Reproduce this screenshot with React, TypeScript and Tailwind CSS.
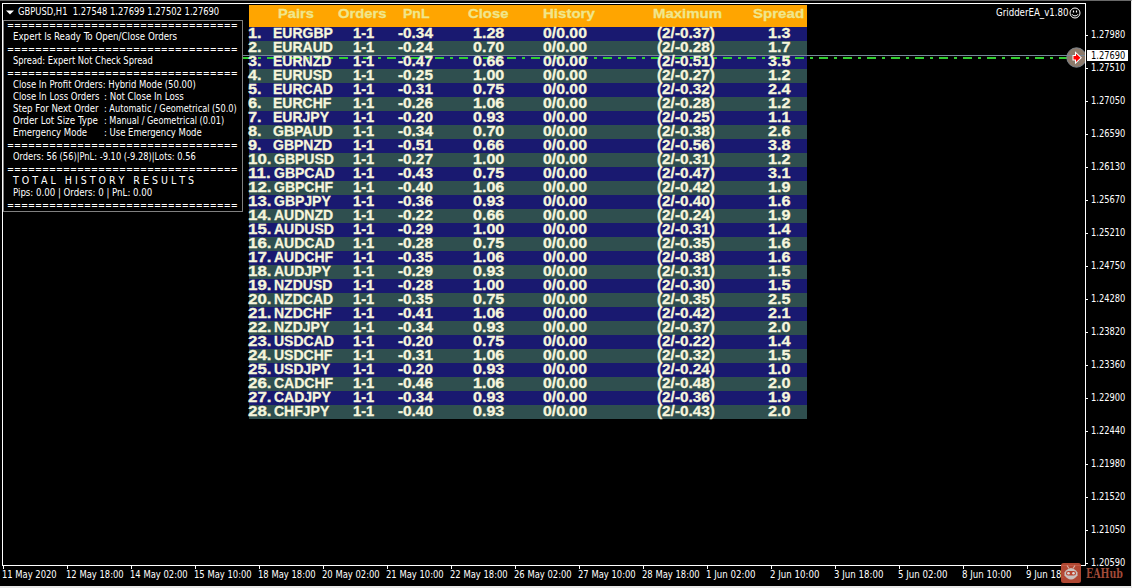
import { useLayoutEffect, useRef, useState } from "react";

type PairRow = [pair: string, pnl: string, close: string, maximum: string, spread: string];

const PAIRS: PairRow[] = [
  ["EURGBP", "-0.34", "1.28", "(2/-0.37)", "1.3"],
  ["EURAUD", "-0.24", "0.70", "(2/-0.28)", "1.7"],
  ["EURNZD", "-0.47", "0.66", "(2/-0.51)", "3.5"],
  ["EURUSD", "-0.25", "1.00", "(2/-0.27)", "1.2"],
  ["EURCAD", "-0.31", "0.75", "(2/-0.32)", "2.4"],
  ["EURCHF", "-0.26", "1.06", "(2/-0.28)", "1.2"],
  ["EURJPY", "-0.20", "0.93", "(2/-0.25)", "1.1"],
  ["GBPAUD", "-0.34", "0.70", "(2/-0.38)", "2.6"],
  ["GBPNZD", "-0.51", "0.66", "(2/-0.56)", "3.8"],
  ["GBPUSD", "-0.27", "1.00", "(2/-0.31)", "1.2"],
  ["GBPCAD", "-0.43", "0.75", "(2/-0.47)", "3.1"],
  ["GBPCHF", "-0.40", "1.06", "(2/-0.42)", "1.9"],
  ["GBPJPY", "-0.36", "0.93", "(2/-0.40)", "1.6"],
  ["AUDNZD", "-0.22", "0.66", "(2/-0.24)", "1.9"],
  ["AUDUSD", "-0.29", "1.00", "(2/-0.31)", "1.4"],
  ["AUDCAD", "-0.28", "0.75", "(2/-0.35)", "1.6"],
  ["AUDCHF", "-0.35", "1.06", "(2/-0.38)", "1.6"],
  ["AUDJPY", "-0.29", "0.93", "(2/-0.31)", "1.5"],
  ["NZDUSD", "-0.28", "1.00", "(2/-0.30)", "1.5"],
  ["NZDCAD", "-0.35", "0.75", "(2/-0.35)", "2.5"],
  ["NZDCHF", "-0.41", "1.06", "(2/-0.42)", "2.1"],
  ["NZDJPY", "-0.34", "0.93", "(2/-0.37)", "2.0"],
  ["USDCAD", "-0.20", "0.75", "(2/-0.22)", "1.4"],
  ["USDCHF", "-0.31", "1.06", "(2/-0.32)", "1.5"],
  ["USDJPY", "-0.20", "0.93", "(2/-0.24)", "1.0"],
  ["CADCHF", "-0.46", "1.06", "(2/-0.48)", "2.0"],
  ["CADJPY", "-0.34", "0.93", "(2/-0.36)", "1.9"],
  ["CHFJPY", "-0.40", "0.93", "(2/-0.43)", "2.0"],
];

const HEADERS: [string, number][] = [
  ["Pairs", 36],
  ["Orders", 49],
  ["PnL", 27],
  ["Close", 40],
  ["History", 52],
  ["Maximum", 69],
  ["Spread", 51],
];

const SEPARATOR = "=".repeat(33);

type StatusLine = { label: string; width: number; value?: string; valueWidth?: number };

// null draws a separator
const STATUS: (StatusLine | null)[] = [
  null,
  { label: "Expert Is Ready To Open/Close Orders", width: 164 },
  null,
  { label: "Spread: Expert Not Check Spread", width: 140 },
  null,
  { label: "Close In Profit Orders: Hybrid Mode (50.00)", width: 183 },
  { label: "Close In Loss Orders", width: 86, value: ": Not Close In Loss", valueWidth: 80 },
  { label: "Step For Next Order", width: 86, value: ": Automatic / Geometrical (50.0)", valueWidth: 133 },
  { label: "Order Lot Size Type", width: 85, value: ": Manual / Geometrical (0.01)", valueWidth: 120 },
  { label: "Emergency Mode", width: 74, value: ": Use Emergency Mode", valueWidth: 98 },
  null,
  { label: "Orders: 56 (56)|PnL: -9.10 (-9.28)|Lots: 0.56", width: 183 },
  null,
  { label: "T O T A L   H I S T O R Y   R E S U L T S", width: 181 },
  { label: "Pips: 0.00 | Orders: 0 | PnL: 0.00", width: 139 },
  null,
];

const PRICES = [
  "1.27980", "1.27510", "1.27050", "1.26590", "1.26130", "1.25670", "1.25210", "1.24750", "1.24280",
  "1.23820", "1.23360", "1.22900", "1.22440", "1.21980", "1.21520", "1.21050", "1.20590",
];

const TIMES = [
  "11 May 2020", "12 May 18:00", "14 May 02:00", "15 May 10:00", "18 May 18:00", "20 May 02:00",
  "21 May 10:00", "22 May 18:00", "26 May 02:00", "27 May 10:00", "28 May 18:00", "1 Jun 02:00",
  "2 Jun 10:00", "3 Jun 18:00", "5 Jun 02:00", "8 Jun 10:00", "9 Jun 18:00",
];

// Stretches or squeezes a single line of text to a fixed width.
function Fit({ text, width }: { text: string; width: number }) {
  const ref = useRef<HTMLSpanElement>(null);
  const [scale, setScale] = useState(1);

  useLayoutEffect(() => {
    if (ref.current) setScale(width / ref.current.offsetWidth);
  }, [text, width]);

  return (
    <span className="block" style={{ width }}>
      <span ref={ref} className="inline-block origin-left whitespace-pre" style={{ transform: `scaleX(${scale})` }}>
        {text}
      </span>
    </span>
  );
}

function StatusPanel() {
  return (
    <div className="relative z-30 h-48 w-60 border border-[#808080] bg-black">
      <div className="-mt-[2px]">
        {STATUS.map((line, i) =>
          line ? (
            <div key={i} className="flex h-3 items-center pl-[9px]">
              <div className={line.value ? "w-[91px]" : ""}>
                <Fit text={line.label} width={line.width} />
              </div>
              {line.value && <Fit text={line.value} width={line.valueWidth ?? 0} />}
            </div>
          ) : (
            <div key={i} className="flex h-3 translate-y-px items-center pl-[3px]">
              <Fit text={SEPARATOR} width={231} />
            </div>
          )
        )}
      </div>
    </div>
  );
}

function PairsTable() {
  return (
    <div className="mt-px ml-1.5 w-[558px] font-['Liberation_Sans',Arial,sans-serif] text-[14px] leading-[14px] font-bold [-webkit-text-stroke:0.3px]">
      <div className="grid h-[22px] grid-cols-[60px_65px_65px_75px_110px_100px_54px] bg-[#ffa500] pt-[2px] pl-[29px] text-[13px] text-[#f0e68c]">
        {HEADERS.map(([name, width]) => (
          <Fit key={name} text={name} width={width} />
        ))}
      </div>
      {PAIRS.map(([pair, pnl, close, maximum, spread], i) => (
        <div key={pair} className={i % 2 ? "h-3.5 bg-[#2f4f4f]" : "h-3.5 bg-[#191970]"}>
          <div className="relative z-20 grid h-3.5 -translate-y-px grid-cols-[24px_80px_45px_75px_70px_114px_111px_39px] text-[#f5f5dc]">
            <div className="-ml-px">
              <Fit text={`${i + 1}.`} width={i < 9 ? 14 : 23} />
            </div>
            <span className={i < 9 ? "" : "pl-px"}>{pair}</span>
            <Fit text="1-1" width={21} />
            <Fit text={pnl} width={35} />
            <Fit text={close} width={31} />
            <Fit text="0/0.00" width={44} />
            <Fit text={maximum} width={58} />
            <Fit text={spread} width={22} />
          </div>
        </div>
      ))}
    </div>
  );
}

// Bid line, dash-dot trade level and the order marker at its right end.
function PriceLines() {
  return (
    <svg className="absolute top-[42px] left-0 z-10" width="1082" height="24" viewBox="0 0 1082 24">
      <path d="M240 9.5H1082" stroke="#778899" />
      <path d="M240 12H1082" stroke="#32cd32" strokeWidth="2" strokeDasharray="9 6 3 6" />
      <circle cx="1073.5" cy="11.5" r="9.7" fill="#8d7b6c" stroke="#7d858c" />
      <path d="M1064 9.5h18" stroke="#778899" />
      <path
        d="M1070.5 10h2.500v-2.500l4.500 4.200-4.500 4.300v-2.500h-2.500z"
        fill="#ff0000"
        stroke="#fff"
        strokeWidth="2"
        paintOrder="stroke"
      />
    </svg>
  );
}

function Smiley() {
  return (
    <svg width="12" height="12" viewBox="0 0 12 12" fill="none" stroke="#fff">
      <circle cx="6" cy="6" r="5" />
      <path d="M3 7.2c.8 2.2 5.2 2.2 6 0" />
      <path d="M4.5 3.5v2M7.5 3.5v2" strokeWidth="1.2" />
    </svg>
  );
}

function Watermark() {
  return (
    <div className="absolute top-[562px] left-[1061px] z-40 flex items-end gap-[5px] text-[#a14a38]">
      <svg width="20" height="20" viewBox="0 0 20 20">
        <rect width="20" height="20" rx="2.5" fill="#bd4c36" fillOpacity="0.93" />
        <path d="M6 2.5l2 3M14 2.5l-2 3" stroke="#d9aaa0" strokeWidth="1.2" />
        <path d="M5 7.5Q10 2.5 15 7.5l1.5 2v3L14 15q-4 3-8 0l-2.500-2.500v-3z" fill="#c9c0bd" />
        <rect x="5" y="8" width="10" height="4.500" rx="2.200" fill="#b9432e" />
        <circle cx="7.500" cy="10.200" r="1.300" fill="#ddd" />
        <circle cx="12.500" cy="10.200" r="1.300" fill="#ddd" />
      </svg>
      <div className="pb-[3px] font-['DejaVu_Serif',serif] text-[12px] leading-[11px] font-bold">
        <Fit text="EAHub" width={37} />
      </div>
    </div>
  );
}

export default function App() {
  return (
    <div className="relative flex h-[588px] w-[1132px] flex-col overflow-hidden border-t border-r border-t-[#696969] border-r-[#e8e8e8] bg-black font-['DejaVu_Sans_Condensed','DejaVu_Sans',sans-serif] text-[10px] leading-3 text-white">
      <div className="mt-[2px] ml-[2px] flex h-[563px] shrink-0">
        <div className="relative flex w-[1084px] border border-white">
          <div>
            <div className="flex h-4 items-center pl-[3px]">
              <svg className="mr-1" width="8" height="5" viewBox="0 0 8 5">
                <path d="M0 .5h8L4 4.500z" fill="#fff" />
              </svg>
              <Fit text="GBPUSD,H1  1.27548 1.27699 1.27502 1.27690" width={201} />
            </div>
            <StatusPanel />
          </div>
          <PairsTable />
          <div className="mt-[3px] mr-1 ml-auto flex h-3 items-center">
            <Fit text="GridderEA_v1.80" width={73} />
            <Smiley />
          </div>
          <PriceLines />
        </div>
        <div className="relative w-[45px] pt-[26px]">
          {PRICES.map((price) => (
            <div key={price} className="flex h-[33px] items-start">
              <div className="flex h-3 items-center">
                <span className="mr-[3px] h-px w-[2px] bg-white" />
                <Fit text={price} width={34} />
              </div>
            </div>
          ))}
          <div className="absolute top-[47px] left-px flex h-[11px] w-[41px] items-center bg-white pl-1 text-black">
            <Fit text="1.27690" width={34} />
          </div>
        </div>
      </div>
      <div className="flex h-5 shrink-0 pl-[2px]">
        {TIMES.map((time, i) => (
          <div key={time} className="w-16 shrink-0">
            <div className="ml-px h-[3px] w-px bg-white" />
            <Fit text={time} width={i === 0 ? 55 : i < 11 ? 58 : 49} />
          </div>
        ))}
      </div>
      <div className="h-[2px] shrink-0 bg-[#e8e8e8]" />
      <Watermark />
    </div>
  );
}
